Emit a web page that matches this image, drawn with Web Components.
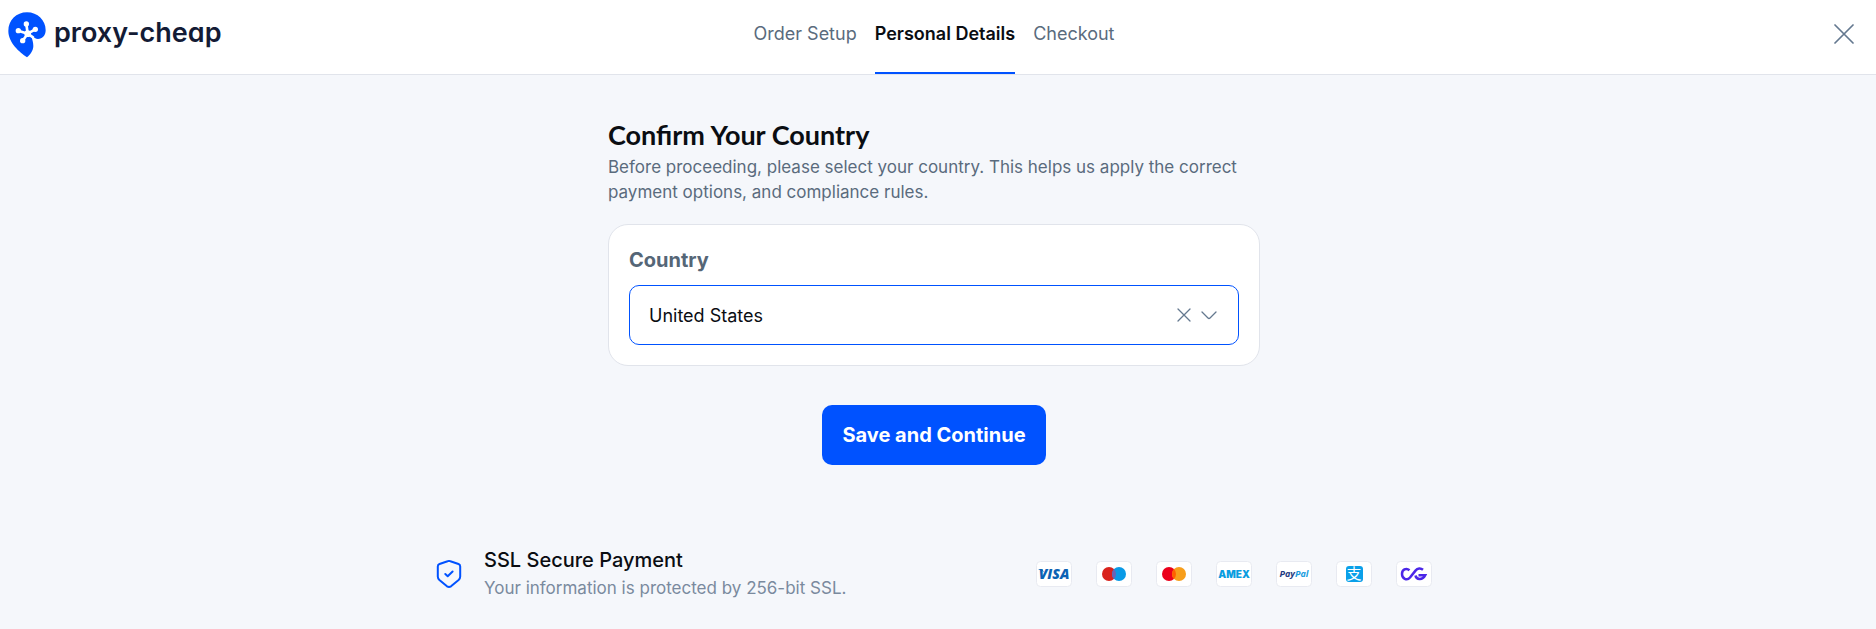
<!DOCTYPE html>
<html lang="en">
<head>
<meta charset="utf-8">
<meta name="viewport" content="width=device-width, initial-scale=1">
<title>Personal Details – proxy-cheap</title>
<style>
  :root {
    --blue: #0052ff;
    --ink: #0a0d12;
    --slate: #5a6b7d;
    --line: #e1e4eb;
    --page: #f5f7fb;
  }
  body {
    margin: 0;
    background: var(--page);
    color: var(--ink);
    font: 18px/25px Inter, "Liberation Sans", sans-serif;
  }
</style>
</head>
<body>
<checkout-page></checkout-page>

<script>
const define = (name, html, setup) => {
  const template = document.createElement('template');
  template.innerHTML = html;
  customElements.define(name, class extends HTMLElement {
    constructor() {
      super();
      this.attachShadow({ mode: 'open' }).append(template.content.cloneNode(true));
    }
    connectedCallback() { if (setup) setup(this, this.shadowRoot); }
  });
};

define('brand-logo', `
  <style>
    :host { display: block; }
    a { display: inline-flex; align-items: flex-start; gap: 8px; color: #131b35; text-decoration: none;
        font: 600 27px/42px Inter, sans-serif; font-feature-settings: "cv11"; }
    svg { display: block; width: 38px; height: 46px; }
  </style>
  <a href="#"><svg viewBox="23 35 114 138" aria-hidden="true">
    <path fill="#0052ff" d="M80 36C112 36 136 60 136 90C136 105 126 116 113 116C106 116 101 111 94 111C96 119 99 126 99 137C99 150 90 163 80 171C58 156 24 127 24 92C24 60 48 36 80 36Z"/>
    <g stroke="#fff" stroke-width="8" stroke-linecap="round" fill="none"><path d="M82 100L78 71M82 100L105 87M82 100L54 91M82 100L67 121M82 100L98 111"/></g>
    <g fill="#fff"><circle cx="82" cy="100" r="10"/><circle cx="78" cy="71" r="8"/><circle cx="105" cy="87" r="8"/><circle cx="54" cy="91" r="8"/><circle cx="67" cy="121" r="8"/></g>
  </svg><span>proxy-cheap</span></a>`);

define('step-tab', `
  <style>
    :host { display: block; }
    a { display: block; height: 100%; box-sizing: border-box; padding-top: 21px; color: var(--slate);
        text-decoration: none; border-bottom: 2px solid transparent; }
    :host([current]) a { color: var(--ink); font-weight: 600; border-color: var(--blue); }
  </style>
  <a href="#"><slot></slot></a>`,
  (host, root) => { if (host.hasAttribute('current')) root.querySelector('a').setAttribute('aria-current', 'step'); });

define('checkout-header', `
  <style>
    :host { display: grid; grid-template-columns: 1fr auto 1fr; min-height: 74px; padding: 0 16px 0 8px;
            background: #fff; border-bottom: 1px solid var(--line); }
    brand-logo { padding-top: 12px; }
    nav { display: flex; gap: 18px; }
    button { justify-self: end; align-self: start; margin-top: 18px; width: 32px; height: 32px; padding: 0;
             border: 0; background: none; color: #64788f; }
    svg { display: block; margin: auto; }
  </style>
  <brand-logo></brand-logo>
  <nav aria-label="Order steps"><step-tab>Order Setup</step-tab><step-tab current>Personal Details</step-tab><step-tab>Checkout</step-tab></nav>
  <button type="button" aria-label="Close"><svg width="20" height="20" viewBox="0 0 20 20" fill="none" stroke="currentColor" stroke-width="1.7" stroke-linecap="round"><path d="M1 1L19 19M19 1L1 19"/></svg></button>`);

define('page-heading', `
  <style>
    :host { display: block; color: var(--slate); }
    h1 { margin: 0 0 2px; color: var(--ink); font: 700 27px/36px Lato, sans-serif; }
    p { margin: 0; font-size: 17px; }
  </style>
  <h1><slot name="title"></slot></h1><p><slot></slot></p>`);

define('country-card', `
  <style>
    :host { display: block; padding: 20px; background: #fff; border: 1px solid var(--line); border-radius: 20px; }
    label { display: block; margin-bottom: 10px; color: #556677; font-weight: 700; font-size: 20px; line-height: 30px; }
    .field { display: grid; align-items: center; }
    .field > * { grid-area: 1 / 1; }
    select { appearance: none; width: 100%; height: 60px; padding: 0 80px 0 19px; border: 1px solid var(--blue);
             border-radius: 10px; outline: 0; background: #fff; color: var(--ink); font: inherit; }
    .tools { display: flex; align-items: center; gap: 7px; justify-self: end; padding-right: 21px; color: #64788f; pointer-events: none; }
    button { width: 18px; height: 18px; padding: 0; border: 0; background: none; color: inherit; pointer-events: auto; }
    svg { display: block; fill: none; stroke: currentColor; stroke-width: 1.3; stroke-linecap: round; stroke-linejoin: round; }
  </style>
  <label for="country">Country</label>
  <div class="field">
    <select id="country"><option>United States</option></select>
    <div class="tools">
      <button type="button" aria-label="Clear country"><svg width="18" height="18" viewBox="0 0 18 18"><path d="M3 3L15 15M15 3L3 15"/></svg></button>
      <svg width="18" height="18" viewBox="0 0 18 18" aria-hidden="true"><path d="M2 6L8 12Q9 13 10 12L16 6"/></svg>
    </div>
  </div>`);

define('primary-button', `
  <style>
    :host { display: block; }
    button { height: 60px; padding: 0 20px; border: 0; border-radius: 10px; background: var(--blue); color: #fff;
             font: 700 20px/28px Inter, sans-serif; }
  </style>
  <button type="submit"><slot></slot></button>`);

define('secure-note', `
  <style>
    :host { display: flex; align-items: center; gap: 20px; line-height: 28px; }
    svg { flex: none; }
    strong { display: block; font-weight: 500; font-size: 20px; }
    span { display: block; color: #7a8a9e; font-size: 17px; }
  </style>
  <svg width="30" height="30" viewBox="0 0 30 30" fill="none" stroke="#0052ff" stroke-width="2" stroke-linecap="round" stroke-linejoin="round" aria-hidden="true">
    <path d="M13.600 2.200Q15 1.600 16.400 2.200L24.500 5Q26.200 5.600 26.200 7.400V17.500Q26.200 19.600 24.600 21L17 27.300Q15 28.600 13 27.300L5.400 21Q3.800 19.600 3.800 17.500V7.400Q3.800 5.600 5.500 5Z"/><path d="M11.300 15L13.700 17.200L18.600 12.500"/></svg>
  <div><strong>SSL Secure Payment</strong><span>Your information is protected by 256-bit SSL.</span></div>`);

const marks = {
  Visa: `<path d="M2 8H6L8 11Z" fill="#0b62b4"/><text x="18" y="18" text-anchor="middle" font-family="Open Sans, sans-serif" font-size="14" font-weight="800" font-style="italic" fill="#0b62b4">VISA</text>`,
  Maestro: `<circle cx="13" cy="13" r="7" fill="#d9221c"/><circle cx="23" cy="13" r="7" fill="#0a9ae6"/><path d="M18 8.100A7 7 0 0 1 18 17.900A7 7 0 0 1 18 8.100" fill="#6c62b4"/>`,
  Mastercard: `<circle cx="13" cy="13" r="7" fill="#eb001b"/><circle cx="23" cy="13" r="7" fill="#f79e1b"/><path d="M18 8.100A7 7 0 0 1 18 17.900A7 7 0 0 1 18 8.100" fill="#ff5f00"/>`,
  Amex: `<text x="18" y="17" text-anchor="middle" font-family="Inter, sans-serif" font-size="10" font-weight="900" fill="#0a9de0">AMEX</text>`,
  PayPal: `<text x="18" y="16" text-anchor="middle" font-family="Open Sans, sans-serif" font-size="9" font-weight="700" font-style="italic" fill="#1f3a80">Pay<tspan fill="#1a9de0">Pal</tspan></text>`,
  Alipay: `<rect x="10" y="5" width="17" height="16" rx="3" fill="#0aa0e9"/><text x="18" y="18" text-anchor="middle" font-family="Noto Sans CJK SC, sans-serif" font-size="15" font-weight="400" fill="#fff">支</text>`,
  CoinGate: `<path d="M13.500 9.200C10 6.300 6 8.800 6 13C6 17.500 10.800 20.200 14 16.500L19.500 9.600C21.500 7 24.800 7 27 8.800M19.500 14.500C20.200 18.800 26.500 19.800 29.200 14.300H22.500" fill="none" stroke="#4b26e8" stroke-width="2.500"/>`
};

customElements.define('pay-mark', class extends HTMLElement {
  constructor() { super(); this.attachShadow({ mode: 'open' }); }
  connectedCallback() {
    const name = this.getAttribute('name');
    this.shadowRoot.innerHTML = `
      <style>:host { display: flex; justify-content: center; width: 40px; } svg { display: block; }</style>
      <svg width="36" height="26" viewBox="0 0 36 26" role="img" aria-label="${name}">
        <rect x=".5" y=".5" width="35" height="25" rx="4" fill="#fff" stroke="#e8eaf1"/>${marks[name]}</svg>`;
  }
});

define('checkout-footer', `
  <style>
    :host { display: flex; flex-wrap: wrap; align-items: center; justify-content: space-between; gap: 20px; }
    .marks { display: flex; flex-wrap: wrap; gap: 20px; }
  </style>
  <secure-note></secure-note>
  <div class="marks">${Object.keys(marks).map(n => `<pay-mark name="${n}"></pay-mark>`).join('')}</div>`);

define('checkout-page', `
  <style>
    :host { display: block; }
    main, .foot { display: flex; flex-direction: column; align-items: center; padding: 0 16px 0 8px; }
    form { display: flex; flex-direction: column; box-sizing: border-box; width: 100%; max-width: 652px; padding-top: 42px; }
    country-card { margin-top: 19px; }
    primary-button { align-self: center; margin-top: 39px; }
    .foot { padding-top: 81px; padding-bottom: 28px; }
    checkout-footer { width: 100%; max-width: 1000px; }
  </style>
  <checkout-header></checkout-header>
  <main><form>
    <page-heading><span slot="title">Confirm Your Country</span>Before proceeding, please select your country. This helps us apply the correct payment options, and compliance rules.</page-heading>
    <country-card></country-card>
    <primary-button>Save and Continue</primary-button>
  </form></main>
  <footer class="foot"><checkout-footer></checkout-footer></footer>`);
</script>
</body>
</html>
